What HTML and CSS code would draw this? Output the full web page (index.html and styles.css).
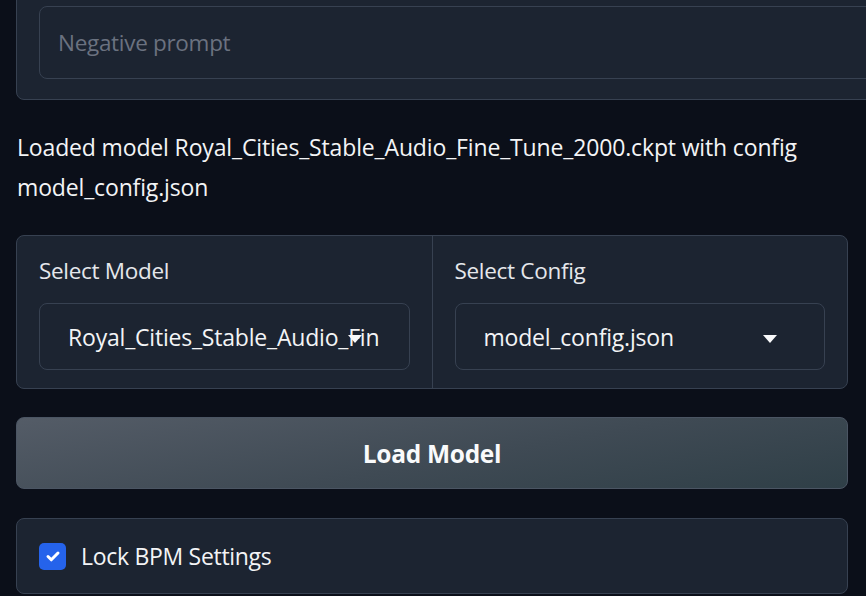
FILE: index.html
```html
<!DOCTYPE html>
<html>
<head>
<meta charset="utf-8">
<link rel="stylesheet" href="styles.css">
</head>
<body>
<div class="page">
  <div class="panel top-panel">
    <div class="textarea">Negative prompt</div>
  </div>
  <p class="status">Loaded model Royal_Cities_Stable_Audio_Fine_Tune_2000.ckpt with config model_config.json</p>
  <div class="panel row">
    <div class="col">
      <div class="label">Select Model</div>
      <div class="dropdown">
        <span class="value">Royal_Cities_Stable_Audio_Fine_Tune_2000.ckpt</span>
        <span class="arrow"></span>
      </div>
    </div>
    <div class="col">
      <div class="label">Select Config</div>
      <div class="dropdown">
        <span class="value">model_config.json</span>
        <span class="arrow"></span>
      </div>
    </div>
  </div>
  <button class="btn">Load Model</button>
  <div class="panel check-panel">
    <span class="checkbox">
      <svg viewBox="0 0 18 18" width="18" height="18"><path d="M4 9.5l3.3 3.3L14 6" fill="none" stroke="#fff" stroke-width="3" stroke-linecap="round" stroke-linejoin="round"/></svg>
    </span>
    <span class="check-label">Lock BPM Settings</span>
  </div>
</div>
</body>
</html>
```

FILE: styles.css
```css
html, body {
  margin: 0;
  padding: 0;
  background: #0b0f19;
  overflow: hidden;
}
body {
  font-family: "Open Sans", "Lato", sans-serif;
  color: #f3f4f6;
  width: 866px;
  height: 596px;
}
.page {
  padding: 0 18px 0 16px;
  display: flex;
  flex-direction: column;
}
.panel {
  background: #1c2431;
  border: 1px solid #374151;
  border-radius: 8px;
  box-sizing: border-box;
}
.top-panel {
  margin-top: -10px;
  margin-right: -40px;
  border-top-left-radius: 0;
  border-top-right-radius: 0;
  padding: 15px 0 19px 22px;
  height: 110px;
}
.textarea {
  border: 1px solid #374151;
  border-radius: 8px;
  height: 73px;
  box-sizing: border-box;
  padding-left: 18px;
  display: flex;
  align-items: center;
  font-size: 22.5px;
  letter-spacing: -0.3px;
  color: #6b7280;
  background: #1c2431;
}
.status {
  margin: 27px 0 0 1px;
  font-size: 23px;
  letter-spacing: -0.15px;
  line-height: 40px;
  color: #f3f4f6;
  width: 820px;
}
.row {
  margin-top: 28px;
  height: 154px;
  display: flex;
}
.col {
  flex: 1 1 0;
  min-width: 0;
  padding: 20px 22px 0 22px;
  display: flex;
  flex-direction: column;
}
.col + .col {
  border-left: 1px solid #374151;
}
.label {
  font-size: 22.5px;
  letter-spacing: -0.3px;
  line-height: 30px;
  color: #e5e7eb;
}
.dropdown {
  margin-top: 17px;
  height: 67px;
  border: 1px solid #374151;
  border-radius: 8px;
  box-sizing: border-box;
  position: relative;
  display: flex;
  align-items: center;
  padding: 0 29px 0 28px;
  overflow: hidden;
}
.value {
  font-size: 23px;
  letter-spacing: -0.2px;
  color: #f3f4f6;
  white-space: nowrap;
  overflow: hidden;
}
.arrow {
  position: absolute;
  right: 47px;
  top: 31px;
  width: 0;
  height: 0;
  border-left: 7px solid transparent;
  border-right: 7px solid transparent;
  border-top: 8px solid #f9fafb;
}
.btn {
  margin-top: 28px;
  height: 72px;
  border: 1px solid #4b5563;
  border-radius: 8px;
  background: linear-gradient(170deg, #545c67 0%, #3f4a54 55%, #2f3f47 100%);
  color: #f9fafb;
  font-family: "Open Sans", "Lato", sans-serif;
  font-weight: 700;
  font-size: 24.5px;
  letter-spacing: -0.3px;
  padding: 0;
}
.check-panel {
  margin-top: 29px;
  height: 76px;
  display: flex;
  align-items: center;
  padding-left: 22px;
  gap: 15px;
}
.checkbox {
  width: 27px;
  height: 27px;
  border-radius: 5px;
  background: #2563eb;
  display: flex;
  align-items: center;
  justify-content: center;
}
.check-label {
  font-size: 23px;
  letter-spacing: -0.3px;
  color: #f3f4f6;
}
```
